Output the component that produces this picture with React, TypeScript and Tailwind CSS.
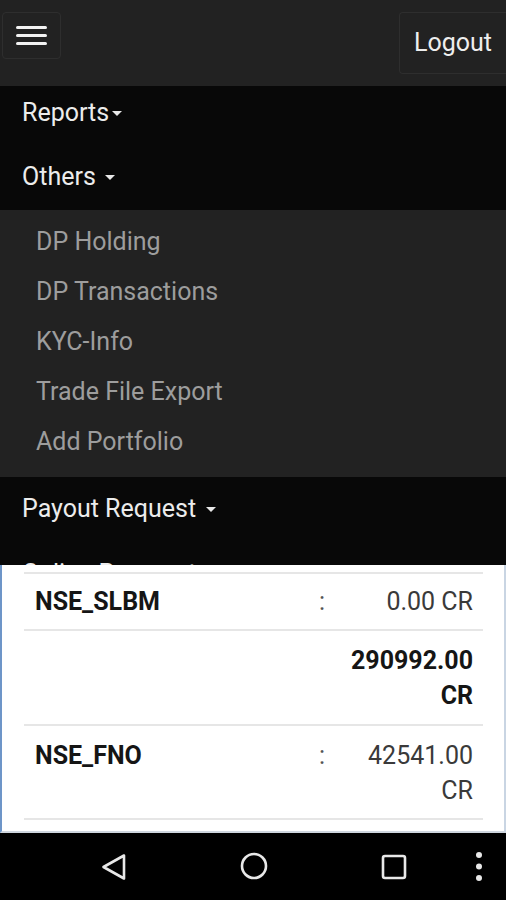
import React from "react";

const font = { fontFamily: "Roboto, 'Noto Sans', sans-serif" };

function Caret({ ml }: { ml: string }) {
  return (
    <span className={`${ml} inline-block h-0 w-0 border-x-[5px] border-t-[5px] border-x-transparent border-t-[#e8e8e8] align-middle`} />
  );
}

export default function App() {
  const sub = ["DP Holding", "DP Transactions", "KYC-Info", "Trade File Export", "Add Portfolio"];
  return (
    <div className="flex h-[900px] w-[506px] flex-col overflow-hidden bg-black" style={font}>
      {/* header */}
      <div className="flex h-[86px] shrink-0 items-start justify-between bg-[#222222]">
        <div className="ml-[2px] mt-[12px] flex h-[47px] w-[59px] flex-col items-center justify-center gap-[5px] rounded-[4px] border border-[#2e2e2e]">
          <span className="block h-[3px] w-[31px] rounded-sm bg-[#f2f2f2]" />
          <span className="block h-[3px] w-[31px] rounded-sm bg-[#f2f2f2]" />
          <span className="block h-[3px] w-[31px] rounded-sm bg-[#f2f2f2]" />
        </div>
        <div className="mt-[12px] flex h-[62px] w-[107px] items-center rounded-l-[4px] border border-r-0 border-[#2e2e2e] pl-[14px] text-[25px] text-[#eeeeee]">
          Logout
        </div>
      </div>

      {/* nav top */}
      <div className="shrink-0 bg-[#080808] pb-[7px] pt-[1px] text-[25px] text-[#ececec]">
        <div className="flex h-[52px] items-center pl-[22px]">
          Reports<Caret ml="ml-[3px]" />
        </div>
        <div className="mt-[12px] flex h-[52px] items-center pl-[22px]">
          Others
          <Caret ml="ml-[9px]" />
        </div>
      </div>

      {/* submenu */}
      <div className="shrink-0 bg-[#222222] pb-[10px] pt-[7px] text-[25px] text-[#9d9d9d]">
        {sub.map((s) => (
          <div key={s} className="flex h-[50px] items-center pl-[36px]">
            {s}
          </div>
        ))}
      </div>

      {/* payout */}
      <div className="h-[88px] shrink-0 overflow-hidden bg-[#080808] pt-[6px] text-[25px] text-[#ececec]">
        <div className="flex h-[52px] items-center pl-[22px]">
          Payout Request
          <Caret ml="ml-[10px]" />
        </div>
        <div className="mt-[13px] flex h-[52px] items-center pl-[22px]">
          Online Payment
          <Caret ml="ml-[10px]" />
        </div>
      </div>

      {/* card */}
      <div className="h-[268px] shrink-0 overflow-hidden border-b-2 border-l-2 border-r-2 border-b-[#cfd6de] border-l-[#6d95c8] border-r-[#c9d5e3] bg-white pl-[22px] pr-[21px] pt-[7px]">
        <div className="border-t-2 border-[#e6e6e6]">
          <div className="flex pb-[10px] pl-[11px] pr-[10px] pt-[10px] text-[25px] leading-[35px]">
            <div className="flex-1 font-bold text-[#151515]">NSE_SLBM</div>
            <div className="w-[44px] pl-[6px] text-center text-[#555555]">:</div>
            <div className="w-[132px] text-right text-[#3a3a3a]">0.00 CR</div>
          </div>
          <div className="flex border-t-2 border-[#e6e6e6] pb-[11px] pl-[11px] pr-[10px] pt-[12px] text-[25px] leading-[35px]">
            <div className="flex-1" />
            <div className="w-[132px] text-right font-bold text-[#151515]">290992.00 CR</div>
          </div>
          <div className="flex border-t-2 border-[#e6e6e6] pb-[10px] pl-[11px] pr-[10px] pt-[12px] text-[25px] leading-[35px]">
            <div className="flex-1 font-bold text-[#151515]">NSE_FNO</div>
            <div className="w-[44px] pl-[6px] text-center text-[#555555]">:</div>
            <div className="w-[132px] text-right text-[#3a3a3a]">42541.00 CR</div>
          </div>
          <div className="border-t-2 border-[#e6e6e6]" />
        </div>
      </div>

      {/* android nav bar */}
      <div className="relative h-[67px] shrink-0 bg-black">
        <svg className="absolute left-[100px] top-[20px]" width="28" height="28" viewBox="0 0 28 28">
          <path d="M24 2.5 L3.5 14 L24 25.5 Z" fill="none" stroke="#e8e8e8" strokeWidth="2.6" strokeLinejoin="round" />
        </svg>
        <svg className="absolute left-[239px] top-[18px]" width="30" height="30" viewBox="0 0 30 30">
          <circle cx="15" cy="15" r="12" fill="none" stroke="#e8e8e8" strokeWidth="2.6" />
        </svg>
        <svg className="absolute left-[380px] top-[20px]" width="28" height="28" viewBox="0 0 28 28">
          <rect x="3" y="3" width="22" height="22" rx="2" fill="none" stroke="#e8e8e8" strokeWidth="2.6" />
        </svg>
        <svg className="absolute left-[473px] top-[18px]" width="12" height="32" viewBox="0 0 12 32">
          <circle cx="6" cy="4" r="3" fill="#e8e8e8" />
          <circle cx="6" cy="15.5" r="3" fill="#e8e8e8" />
          <circle cx="6" cy="27" r="3" fill="#e8e8e8" />
        </svg>
      </div>
    </div>
  );
}
